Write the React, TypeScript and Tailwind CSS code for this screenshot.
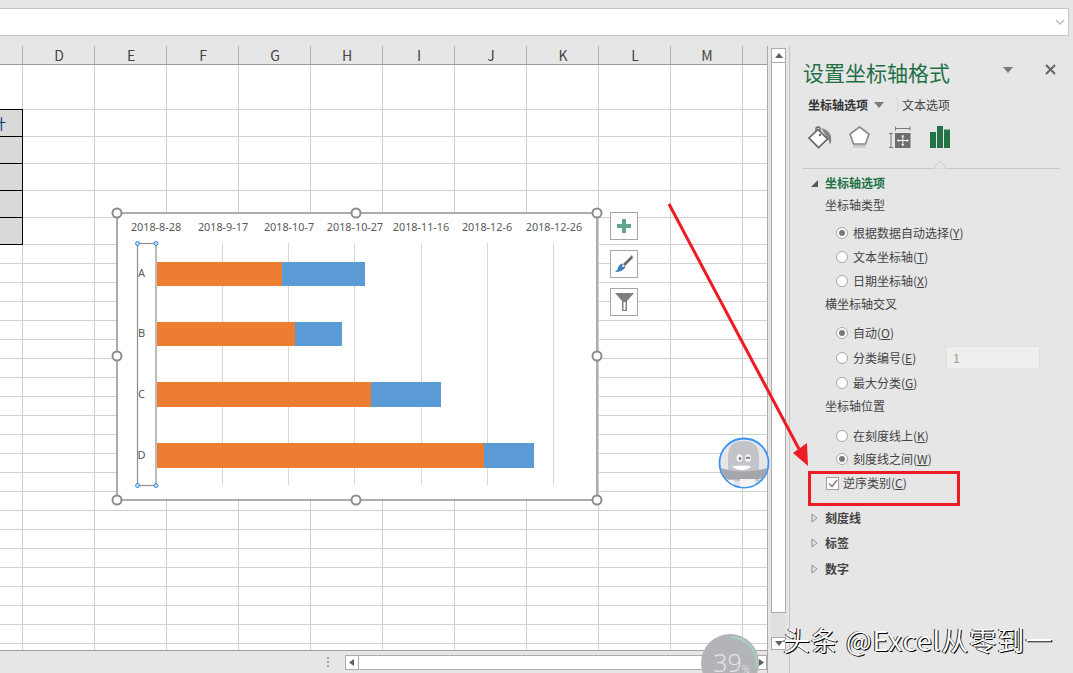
const sans = "font-['Noto_Sans_CJK_SC','Noto_Sans',sans-serif]";
const columns = ["D", "E", "F", "G", "H", "I", "J", "K", "L", "M"];
const dates = [
  { x: 156, t: "2018-8-28" },
  { x: 223, t: "2018-9-17" },
  { x: 289, t: "2018-10-7" },
  { x: 355, t: "2018-10-27" },
  { x: 421, t: "2018-11-16" },
  { x: 487, t: "2018-12-6" },
  { x: 554, t: "2018-12-26" },
];
const gridX = [222, 288, 354, 421, 487, 553];
const bars = [
  { label: "A", y: 262, h: 24, mid: 282, end: 365 },
  { label: "B", y: 322, h: 24, mid: 295, end: 342 },
  { label: "C", y: 382, h: 25, mid: 371, end: 441 },
  { label: "D", y: 443, h: 25, mid: 484, end: 534 },
];
const handles = [
  [117, 213], [356, 213], [597, 213], [117, 356],
  [597, 356], [117, 500], [356, 500], [597, 500],
];
// row heights of the sheet: header block, table rows, then plain rows
const rows = [
  { h: "h-[45px]", table: false },
  { h: "h-[27px]", table: true, first: true },
  { h: "h-[27px]", table: true },
  { h: "h-[27px]", table: true },
  { h: "h-[27px]", table: true },
  { h: "h-[27px]", table: true },
  ...Array.from({ length: 22 }, () => ({ h: "h-[19px]", table: false })),
];

function Sheet() {
  return (
    <div className="flex-1 overflow-hidden bg-white">
      {rows.map((r, i) => (
        <div key={i} className={`flex ${r.h} border-b border-[#d0d0d0]`}>
          {r.table ? (
            <div className="-mb-px -mt-px w-[23px] shrink-0 overflow-hidden border-y border-r border-black bg-[#d9d9d9] text-[14px] leading-[26px] text-[#003a7a]">
              {r.first ? <span className="-ml-[8px] block w-[14px]">计</span> : null}
            </div>
          ) : (
            <div className="w-[23px] shrink-0 border-r border-[#d0d0d0]" />
          )}
          {columns.map((c) => (
            <div key={c} className="w-[72px] shrink-0 border-r border-[#d0d0d0]" />
          ))}
        </div>
      ))}
    </div>
  );
}

function ColumnHeader() {
  return (
    <div className="flex h-[19px] border-b border-[#9c9c9c] bg-[#e6e6e6] text-[14px] leading-[18px] text-[#444]">
      <div className="w-[23px] shrink-0 border-r border-[#b4b4b4]" />
      {columns.map((c) => (
        <div key={c} className="w-[72px] shrink-0 border-r border-[#b4b4b4] pl-px text-center">
          {c}
        </div>
      ))}
    </div>
  );
}

function StatusBar() {
  return (
    <div className="flex h-[23px] items-center border-t border-[#a0a0a0] bg-[#e6e6e6] pl-[327px]">
      <div className="flex w-[18px] flex-col gap-[2px]">
        <span className="h-[2px] w-[2px] bg-[#a8a8a8]" />
        <span className="h-[2px] w-[2px] bg-[#a8a8a8]" />
        <span className="h-[2px] w-[2px] bg-[#a8a8a8]" />
      </div>
      <div className="flex h-[15px] w-[425px] border border-[#ababab] bg-white">
        <div className="flex w-[13px] items-center justify-center border-r border-[#ababab]">
          <svg width="5" height="7" viewBox="0 0 5 7"><path d="M5 0 L0 3.5 L5 7 Z" fill="#606060" /></svg>
        </div>
        <div className="flex-1" />
        <div className="flex w-[11px] items-center justify-center border-l border-[#ababab]">
          <svg width="5" height="7" viewBox="0 0 5 7"><path d="M0 0 L5 3.5 L0 7 Z" fill="#606060" /></svg>
        </div>
      </div>
    </div>
  );
}

function VScroll() {
  return (
    <div className="flex h-[604px] w-[21px] flex-col pl-[3px] pr-[3px] pt-[2px]">
      <div className="flex h-[15px] items-center justify-center border border-[#ababab] bg-white">
        <svg width="8" height="5" viewBox="0 0 8 5"><path d="M0 5 L4 0 L8 5 Z" fill="#606060" /></svg>
      </div>
      <div className="h-[551px] border-x border-b border-[#ababab] bg-white" />
      <div className="h-[24px] bg-[#e0e0e0]" />
      <div className="flex h-[13px] items-center justify-center border border-[#ababab] bg-white">
        <svg width="8" height="5" viewBox="0 0 8 5"><path d="M0 0 L4 5 L8 0 Z" fill="#606060" /></svg>
      </div>
    </div>
  );
}

function Radio({ on, label, hot, h }: { on?: boolean; label: string; hot: string; h: string }) {
  return (
    <div className={`flex ${h} items-center pl-[46px] text-[12px] text-[#444]`}>
      <span className="flex h-[12px] w-[12px] items-center justify-center rounded-full border border-[#a6a6a6] bg-white">
        {on ? <span className="h-[6px] w-[6px] rounded-full bg-[#7a7a7a]" /> : null}
      </span>
      <span className="ml-[5px]">
        {label}(<span className="underline">{hot}</span>)
      </span>
    </div>
  );
}

function Heading({ label, className }: { label: string; className: string }) {
  return <div className={`flex h-[22px] items-center pl-[35px] text-[12px] text-[#444] ${className}`}>{label}</div>;
}

function Collapsed({ label, className }: { label: string; className: string }) {
  return (
    <div className={`flex h-[22px] items-center pl-[21px] text-[12px] font-bold text-[#444] ${className}`}>
      <svg width="7" height="10" viewBox="0 0 7 10" className="mr-[7px]">
        <path d="M1 1 L6 5 L1 9 Z" fill="none" stroke="#8c8c8c" />
      </svg>
      {label}
    </div>
  );
}

function Panel() {
  return (
    <div className={`w-[284px] shrink-0 border-l border-[#c6c6c6] ${sans}`}>
      {/* title */}
      <div className="flex h-[48px] items-center pl-[13px] pt-[4px]">
        <span className="w-[200px] text-[21px] leading-none text-[#1f6f45]">设置坐标轴格式</span>
        <svg width="10" height="6" viewBox="0 0 10 6" className="-mt-[5px]"><path d="M0 0 H10 L5 6 Z" fill="#7a7a7a" /></svg>
        <svg width="11" height="11" viewBox="0 0 11 11" className="-mt-[5px] ml-[32px]">
          <path d="M1 1 L10 10 M10 1 L1 10" stroke="#666" strokeWidth="2" />
        </svg>
      </div>
      {/* tabs */}
      <div className="flex h-[22px] items-center pl-[18px] text-[12px] text-[#444]">
        <span className="font-bold text-[#333]">坐标轴选项</span>
        <svg width="10" height="6" viewBox="0 0 10 6" className="ml-[6px]"><path d="M0 0 H10 L5 6 Z" fill="#7a7a7a" /></svg>
        <span className="ml-[13px] h-[16px] w-px bg-[#dadada]" />
        <span className="ml-[4px]">文本选项</span>
      </div>
      {/* icon tabs */}
      <div className="flex h-[44px] items-start pl-[18px] pt-[10px]">
        <svg width="24" height="24" viewBox="0 0 24 24">
          <path d="M1 12 L10 3.5 L19.5 13 L10.5 21.5 Z" fill="#fff" stroke="#666" strokeWidth="1.7" />
          <path d="M8 5 V2 Q10 0 12 2 V6" fill="none" stroke="#666" strokeWidth="1.3" />
          <circle cx="12" cy="9" r="1.2" fill="#666" />
          <path d="M13 2 Q20 3 23 10 Q24 15 22 19 Q21 14 18.5 11 Z" fill="#858585" />
        </svg>
        <svg width="21" height="24" viewBox="0 0 21 24" className="ml-[17px]">
          <defs>
            <linearGradient id="fade" x1="0" y1="0" x2="0" y2="1">
              <stop offset="0" stopColor="#b8b8b8" />
              <stop offset="1" stopColor="#f4f4f4" />
            </linearGradient>
          </defs>
          <path d="M10.5 1 L20 8 L16.5 18 H4.5 L1 8 Z" fill="#fff" stroke="#8a8a8a" strokeWidth="1.7" />
          <path d="M4.5 19 H16.5 L17.5 24 H3.5 Z" fill="url(#fade)" />
        </svg>
        <svg width="22" height="23" viewBox="0 0 22 23" className="ml-[19px]">
          <path d="M6.5 0.5 V4.5 M21 0.5 V4.5 M6.5 2.5 H21" fill="none" stroke="#777" />
          <path d="M0 7.5 H4 M2 7.5 V21.5 M0 21.5 H4" fill="none" stroke="#777" />
          <rect x="6" y="7" width="15.5" height="15" fill="#6e6e6e" />
          <path d="M13.8 9.5 V19.5 M8.5 14.5 H19" stroke="#fff" strokeWidth="0.9" />
          <path d="M13.8 8.8 L12.3 10.8 H15.3 Z M13.8 20.2 L12.3 18.2 H15.3 Z M7.8 14.5 L9.8 13 V16 Z M19.8 14.5 L17.8 13 V16 Z" fill="#fff" />
        </svg>
        <svg width="20" height="23" viewBox="0 0 20 23" className="ml-[19px]">
          <path d="M0 6 H6 V22 H0 Z M7 0 H13 V22 H7 Z M14 3.5 H20 V22 H14 Z" fill="#217346" />
        </svg>
      </div>
      {/* divider with notch */}
      <div className="relative ml-[13px] h-[9px] w-[257px] border-b border-[#c8c8c8]">
        <svg width="14" height="9" viewBox="0 0 14 9" className="absolute left-[130px] top-0">
          <path d="M0 8.5 L7 1 L14 8.5" fill="#e6e6e6" stroke="#c8c8c8" />
        </svg>
      </div>
      <div className="mt-[3px] flex h-[22px] items-center pl-[21px] text-[12px] font-bold text-[#217346]">
        <svg width="7" height="7" viewBox="0 0 7 7" className="mr-[7px]"><path d="M7 0 V7 H0 Z" fill="#555" /></svg>
        坐标轴选项
      </div>
      <Heading label="坐标轴类型" className="" />
      <div className="h-[5px]" />
      <Radio on label="根据数据自动选择" hot="Y" h="h-[24px]" />
      <Radio label="文本坐标轴" hot="T" h="h-[24px]" />
      <Radio label="日期坐标轴" hot="X" h="h-[23px]" />
      <Heading label="横坐标轴交叉" className="mt-[1px]" />
      <div className="h-[6px]" />
      <Radio on label="自动" hot="O" h="h-[24px]" />
      <div className="flex h-[25px] items-center">
        <div className="w-[156px]">
          <Radio label="分类编号" hot="E" h="h-[25px]" />
        </div>
        <div className="h-[23px] w-[94px] border border-[#e2e2e2] bg-[#efefef] pl-[6px] text-[12px] font-medium leading-[21px] text-[#b8a48e]">1</div>
      </div>
      <Radio label="最大分类" hot="G" h="h-[25px]" />
      <Heading label="坐标轴位置" className="" />
      <div className="h-[7px]" />
      <Radio label="在刻度线上" hot="K" h="h-[24px]" />
      <Radio on label="刻度线之间" hot="W" h="h-[22px]" />
      <div className="mt-px flex h-[24px] items-center pl-[36px] text-[12px] text-[#444]">
        <span className="flex h-[13px] w-[13px] items-center justify-center border border-[#a0a0a0] bg-white">
          <svg width="10" height="9" viewBox="0 0 10 9"><path d="M1 4.5 L4 7.5 L9 1" fill="none" stroke="#777" strokeWidth="1.3" /></svg>
        </span>
        <span className="ml-[4px]">
          逆序类别(<span className="underline">C</span>)
        </span>
      </div>
      <Collapsed label="刻度线" className="mt-[12px]" />
      <Collapsed label="标签" className="mt-[3px]" />
      <Collapsed label="数字" className="mt-[4px]" />
    </div>
  );
}

function Chart() {
  return (
    <svg viewBox="110 205 495 305" className="absolute left-[110px] top-[205px] h-[305px] w-[495px]">
      <rect x="117" y="213" width="480" height="287" fill="#fff" stroke="#929292" strokeWidth="1.5" />
      {gridX.map((x) => (
        <line key={x} x1={x + 0.5} x2={x + 0.5} y1="243" y2="485" stroke="#d9d9d9" />
      ))}
      {dates.map((d) => (
        <text key={d.t} x={d.x} y="231" textAnchor="middle" fontSize="10.8" fill="#595959" fontFamily="Noto Sans, sans-serif">
          {d.t}
        </text>
      ))}
      {bars.map((b) => (
        <g key={b.label}>
          <rect x="157" y={b.y} width={b.mid - 157} height={b.h} fill="#ed7d31" />
          <rect x={b.mid} y={b.y} width={b.end - b.mid} height={b.h} fill="#5b9bd5" />
          <text x="141.5" y={b.y + b.h / 2 + 3} textAnchor="middle" fontSize="11" fill="#595959" fontFamily="Noto Sans, sans-serif">
            {b.label}
          </text>
        </g>
      ))}
      <rect x="137.5" y="243.5" width="18.5" height="242" fill="none" stroke="#8f8f8f" strokeWidth="1.2" />
      {[[137.5, 243.5], [156, 243.5], [137.5, 485.5], [156, 485.5]].map(([x, y]) => (
        <circle key={`${x}-${y}`} cx={x} cy={y} r="2" fill="#bcdcf5" stroke="#3b8fe0" strokeWidth="1" />
      ))}
      {handles.map(([x, y]) => (
        <circle key={`${x}-${y}`} cx={x} cy={y} r="4.5" fill="#fff" stroke="#8c8c8c" strokeWidth="2" />
      ))}
    </svg>
  );
}

function ChartTools() {
  return (
    <div className="absolute left-[610px] top-[212px] flex flex-col gap-[10px]">
      <div className="flex h-[28px] w-[28px] items-center justify-center border border-[#a6a6a6] bg-white">
        <svg width="14" height="14" viewBox="0 0 14 14"><path d="M5 0 H9 V5 H14 V9 H9 V14 H5 V9 H0 V5 H5 Z" fill="#5fa88c" /></svg>
      </div>
      <div className="flex h-[28px] w-[28px] items-center justify-center border border-[#a6a6a6] bg-white">
        <svg width="18" height="18" viewBox="0 0 18 18">
          <path d="M17 0 L18 3 L10 11 L8 9 Z" fill="#6e6e6e" />
          <path d="M7 8.5 L10.5 12 Q8 17 0 17 Q3 15 3 12.5 Q4 9.5 7 8.5 Z" fill="#3f7fbf" />
          <circle cx="8" cy="11" r="1" fill="#fff" />
        </svg>
      </div>
      <div className="flex h-[28px] w-[28px] items-center justify-center border border-[#a6a6a6] bg-white">
        <svg width="19" height="20" viewBox="0 0 19 20">
          <path d="M0 1 H19 L12 9 V19 H7 V9 Z" fill="#7f7f7f" />
          <path d="M8.5 10 V18 H10.5 V10 Z" fill="#fff" />
        </svg>
      </div>
    </div>
  );
}

function Overlays() {
  return (
    <>
      {/* red annotation arrow */}
      <svg viewBox="660 195 160 280" className="absolute left-[660px] top-[195px] h-[280px] w-[160px]">
        <line x1="669" y1="204" x2="799" y2="449" stroke="#ed1c24" strokeWidth="3" />
        <path d="M793 453 L808 466 L807 443 Z" fill="#ed1c24" />
      </svg>
      {/* red box */}
      <div className="absolute left-[808px] top-[471px] h-[35px] w-[152px] border-[3px] border-[#ed1c24]" />
      {/* floating assistant */}
      <svg viewBox="0 0 52 52" className="absolute left-[718px] top-[437px] h-[52px] w-[52px]">
        <defs>
          <clipPath id="bubble"><circle cx="26" cy="26" r="24" /></clipPath>
        </defs>
        <circle cx="26" cy="26" r="24.5" fill="#e6e6ea" stroke="#3a93f0" strokeWidth="1.8" />
        <g clipPath="url(#bubble)">
          <path d="M10 44 V20 Q10 4 25.5 4 Q41 4 41 20 V44 Z" fill="#c2c4ca" />
          <path d="M2 31 Q25 38 50 31 V41 Q25 44 2 41 Z" fill="#a4a6ac" />
          <rect x="22" y="42" width="15" height="10" fill="#f4f4f4" />
          <rect x="10" y="43" width="6" height="9" fill="#f4f4f4" />
        </g>
        <ellipse cx="21.5" cy="21" rx="3" ry="3.8" fill="#f4f4f4" />
        <ellipse cx="30" cy="21" rx="3" ry="3.8" fill="#f4f4f4" />
        <circle cx="22" cy="21.5" r="1.3" fill="#666" />
        <path d="M28 21.5 Q30 19.5 32 21.5" fill="none" stroke="#666" strokeWidth="1.2" />
        <path d="M14 29 Q24 28 33 29 Q31 33 24 33 Q17 33 14 29 Z" fill="#fff" />
      </svg>
      {/* progress bubble */}
      <div className="absolute left-[701px] top-[634px] flex h-[58px] w-[58px] justify-center rounded-full bg-[#b2b4b8] pl-[3px] pt-[12px] font-['Noto_Sans',sans-serif] text-[25px] font-light leading-[32px] text-[#e4e4e4]">
        39<span className="mt-[13px] text-[10px] leading-[20px]">%</span>
      </div>
      <svg viewBox="0 0 58 58" className="absolute left-[701px] top-[634px] h-[58px] w-[58px]">
        <path d="M30 3 A26 26 0 0 1 55 34" fill="none" stroke="#9adcc8" strokeWidth="1.5" />
      </svg>
      {/* watermark */}
      <div className={`absolute left-[783px] top-[621px] whitespace-nowrap text-[27px] leading-[38px] tracking-[1px] text-white [text-shadow:1px_1px_0_#000,-1px_0_0_#222] ${sans}`}>
        头条 @Excel从零到一
      </div>
    </>
  );
}

export default function App() {
  return (
    <div className={`relative flex h-[673px] w-[1073px] flex-col overflow-hidden bg-[#e6e6e6] ${sans}`}>
      <div className="h-[46px] shrink-0 pt-[8px]">
        <div className="flex h-[28px] w-[1069px] items-center justify-end border-y border-r border-[#c6c6c6] bg-white pr-[3px]">
          <svg width="10" height="6" viewBox="0 0 10 6"><path d="M1 1 L5 5 L9 1" fill="none" stroke="#c0c0c0" strokeWidth="1.5" /></svg>
        </div>
      </div>
      <div className="flex min-h-0 flex-1">
        <div className="flex w-[768px] shrink-0 flex-col overflow-hidden border-r border-[#ababab]">
          <ColumnHeader />
          <Sheet />
          <StatusBar />
        </div>
        <VScroll />
        <Panel />
      </div>
      <Chart />
      <ChartTools />
      <Overlays />
    </div>
  );
}
